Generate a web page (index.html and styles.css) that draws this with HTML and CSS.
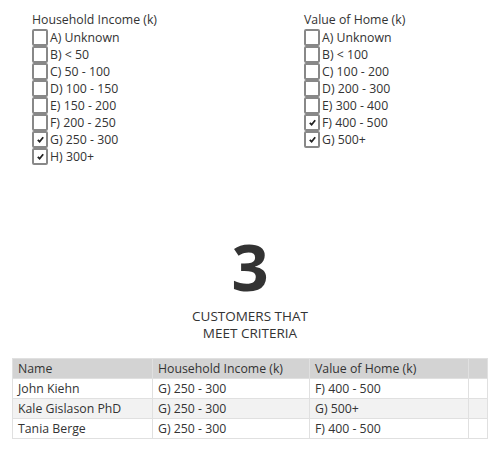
FILE: index.html
```html
<!DOCTYPE html>
<html>
<head>
<meta charset="utf-8">
<link rel="stylesheet" href="styles.css">
</head>
<body>
<div class="filters">
  <div class="group">
    <div class="title">Household Income (k)</div>
    <label class="opt"><span class="box"></span>A) Unknown</label>
    <label class="opt"><span class="box"></span>B) &lt; 50</label>
    <label class="opt"><span class="box"></span>C) 50 - 100</label>
    <label class="opt"><span class="box"></span>D) 100 - 150</label>
    <label class="opt"><span class="box"></span>E) 150 - 200</label>
    <label class="opt"><span class="box"></span>F) 200 - 250</label>
    <label class="opt"><span class="box checked"><svg viewBox="0 0 10 10"><path d="M2 5.5 L4 7.5 L8 2.5" /></svg></span>G) 250 - 300</label>
    <label class="opt"><span class="box checked"><svg viewBox="0 0 10 10"><path d="M2 5.5 L4 7.5 L8 2.5" /></svg></span>H) 300+</label>
  </div>
  <div class="group">
    <div class="title">Value of Home (k)</div>
    <label class="opt"><span class="box"></span>A) Unknown</label>
    <label class="opt"><span class="box"></span>B) &lt; 100</label>
    <label class="opt"><span class="box"></span>C) 100 - 200</label>
    <label class="opt"><span class="box"></span>D) 200 - 300</label>
    <label class="opt"><span class="box"></span>E) 300 - 400</label>
    <label class="opt"><span class="box checked"><svg viewBox="0 0 10 10"><path d="M2 5.5 L4 7.5 L8 2.5" /></svg></span>F) 400 - 500</label>
    <label class="opt"><span class="box checked"><svg viewBox="0 0 10 10"><path d="M2 5.5 L4 7.5 L8 2.5" /></svg></span>G) 500+</label>
  </div>
</div>
<div class="summary">
  <div class="count">3</div>
  <div class="caption">CUSTOMERS THAT<br>MEET CRITERIA</div>
</div>
<table class="results">
  <thead>
    <tr><th class="c1">Name</th><th class="c2">Household Income (k)</th><th class="c3">Value of Home (k)</th><th class="c4"></th></tr>
  </thead>
  <tbody>
    <tr><td>John Kiehn</td><td>G) 250 - 300</td><td>F) 400 - 500</td><td></td></tr>
    <tr class="alt"><td>Kale Gislason PhD</td><td>G) 250 - 300</td><td>G) 500+</td><td></td></tr>
    <tr><td>Tania Berge</td><td>G) 250 - 300</td><td>F) 400 - 500</td><td></td></tr>
  </tbody>
</table>
</body>
</html>
```
FILE: styles.css
```css
body {
  margin: 0;
  font-family: "Open Sans", "DejaVu Sans", sans-serif;
  font-size: 12.3px;
  color: #333;
  background: #fff;
}
.filters {
  display: grid;
  grid-template-columns: 272px 1fr;
  padding: 11px 0 0 32px;
  height: 222px;
  box-sizing: border-box;
}
.title {
  line-height: 17px;
  height: 18px;
}
.opt {
  display: flex;
  align-items: center;
  height: 17px;
  line-height: 17px;
}
.box {
  width: 12px;
  height: 13px;
  border: 2px solid #888;
  border-radius: 2px;
  margin-right: 2px;
  box-sizing: content-box;
  display: flex;
  align-items: center;
  justify-content: center;
  background: #fff;
}
.box svg {
  width: 9px;
  height: 9px;
}
.box svg path {
  fill: none;
  stroke: #222;
  stroke-width: 2;
}
.summary {
  text-align: center;
  padding-top: 11px;
}
.count {
  font-size: 65px;
  font-weight: bold;
  line-height: 66px;
  color: #333;
}
.caption {
  font-size: 13.5px;
  line-height: 17px;
  margin-top: 9px;
}
.results {
  border-collapse: collapse;
  margin: 16px 0 0 12px;
  width: 476px;
  border: 1px solid #e0e0e0;
}
.results th, .results td {
  border: 1px solid #e0e0e0;
  height: 19px;
  padding: 0 5px;
  text-align: left;
  font-weight: normal;
}
.results th {
  background: #d3d3d3;
}
.results tr.alt td {
  background: #f2f2f2;
}
.c1 { width: 129px; }
.c2 { width: 146px; }
.c3 { width: 148px; }
.c4 { width: 8px; }
```
